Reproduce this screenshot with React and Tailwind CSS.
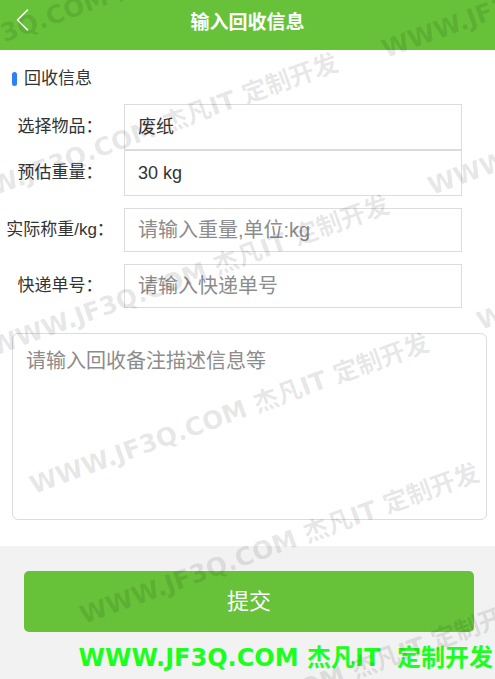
import React from 'react'

const FONT = { fontFamily: '"Liberation Sans", "Noto Sans CJK SC", sans-serif' }
const WIDE = { fontFamily: '"DejaVu Sans", "Noto Sans CJK SC", sans-serif' }

const MARK = 'WWW.JF3Q.COM 杰凡IT 定制开发'

function Watermarks() {
  const cls =
    'absolute whitespace-nowrap origin-bottom-left -rotate-[20deg] text-[25px] leading-none font-bold text-black/10'
  return (
    <div className="pointer-events-none absolute inset-0 z-10 overflow-hidden" style={WIDE}>
      <div className={`${cls} left-[-104px] top-[61px]`}>{MARK}</div>
      <div className={`${cls} left-[-56px] top-[193px]`}>{MARK}</div>
      <div className={`${cls} left-[-5px] top-[335px]`}>{MARK}</div>
      <div className={`${cls} left-[35px] top-[473px]`}>{MARK}</div>
      <div className={`${cls} left-[85px] top-[603px]`}>{MARK}</div>
      <div className={`${cls} left-[133px] top-[739px]`}>{MARK}</div>
      <div className={`${cls} left-[387px] top-[37px]`}>{MARK}</div>
      <div className={`${cls} left-[433px] top-[174px]`}>{MARK}</div>
      <div className={`${cls} left-[482px] top-[309px]`}>{MARK}</div>
    </div>
  )
}

function Row({ label, value, placeholder, tall, className = '' }) {
  const h = tall ? 'h-[46px]' : 'h-[44px]'
  return (
    <div className={`flex items-center ${className}`}>
      <div className="w-[120px] text-center text-[17px] text-[#333]">{label}</div>
      {value ? (
        <div
          className={`ml-[4px] w-[338px] ${h} border border-[#dcdcdc] px-[13px] flex items-center text-[18px] text-[#333]`}
        >
          {value}
        </div>
      ) : (
        <input
          placeholder={placeholder}
          className={`ml-[4px] w-[338px] ${h} border border-[#dcdcdc] px-[13px] text-[20px] text-[#333] placeholder:text-[#8c8c8c] outline-none`}
        />
      )}
    </div>
  )
}

export default function App() {
  return (
    <div className="relative min-h-[679px] w-full bg-[#f2f2f2] flex flex-col overflow-hidden" style={FONT}>
      {/* top bar */}
      <div className="h-[50px] bg-[#67c23a] grid grid-cols-[60px_1fr_60px] items-center">
        <div className="pl-[15px] flex items-center">
          <svg width="14" height="24" viewBox="0 0 14 24" className="mb-[10px]">
            <path d="M12.5 2 L2.5 12 L12.5 22" fill="none" stroke="#fff" strokeWidth="1.6" strokeLinecap="round" strokeLinejoin="round" />
          </svg>
        </div>
        <div className="text-center text-white text-[19px] font-bold mb-[4px]">输入回收信息</div>
        <div />
      </div>

      {/* form */}
      <div className="bg-white pt-[17px] pb-[26px]">
        <div className="flex items-center h-[24px] pl-[12px] gap-[7px]">
          <div className="w-[5px] h-[14px] rounded-full bg-[#2f80f7]" />
          <div className="text-[17px] text-[#333]">回收信息</div>
        </div>

        <Row label="选择物品：" value="废纸" tall className="mt-[13px]" />
        <Row label="预估重量：" value="30 kg" tall />
        <Row label="实际称重/kg：" placeholder="请输入重量,单位:kg" className="mt-[12px]" />
        <Row label="快递单号：" placeholder="请输入快递单号" className="mt-[12px]" />

        <textarea
          placeholder="请输入回收备注描述信息等"
          className="block mt-[25px] ml-[12px] w-[475px] h-[187px] resize-none rounded-[6px] border border-[#dcdcdc] p-[13px] text-[20px] leading-[1.4] text-[#333] placeholder:text-[#8c8c8c] outline-none"
        />
      </div>

      {/* submit */}
      <div className="flex-1 pt-[25px]">
        <button className="mx-[24px] w-[450px] h-[61px] rounded-[5px] bg-[#67c23a] text-white text-[22px]">
          提交
        </button>
        <div
          className="mt-[12px] pr-[2px] text-right whitespace-pre text-[24px] leading-[29px] font-bold text-[#1cff1c]"
          style={WIDE}
        >
          {'WWW.JF3Q.COM 杰凡IT  定制开发'}
        </div>
      </div>

      <Watermarks />
    </div>
  )
}
